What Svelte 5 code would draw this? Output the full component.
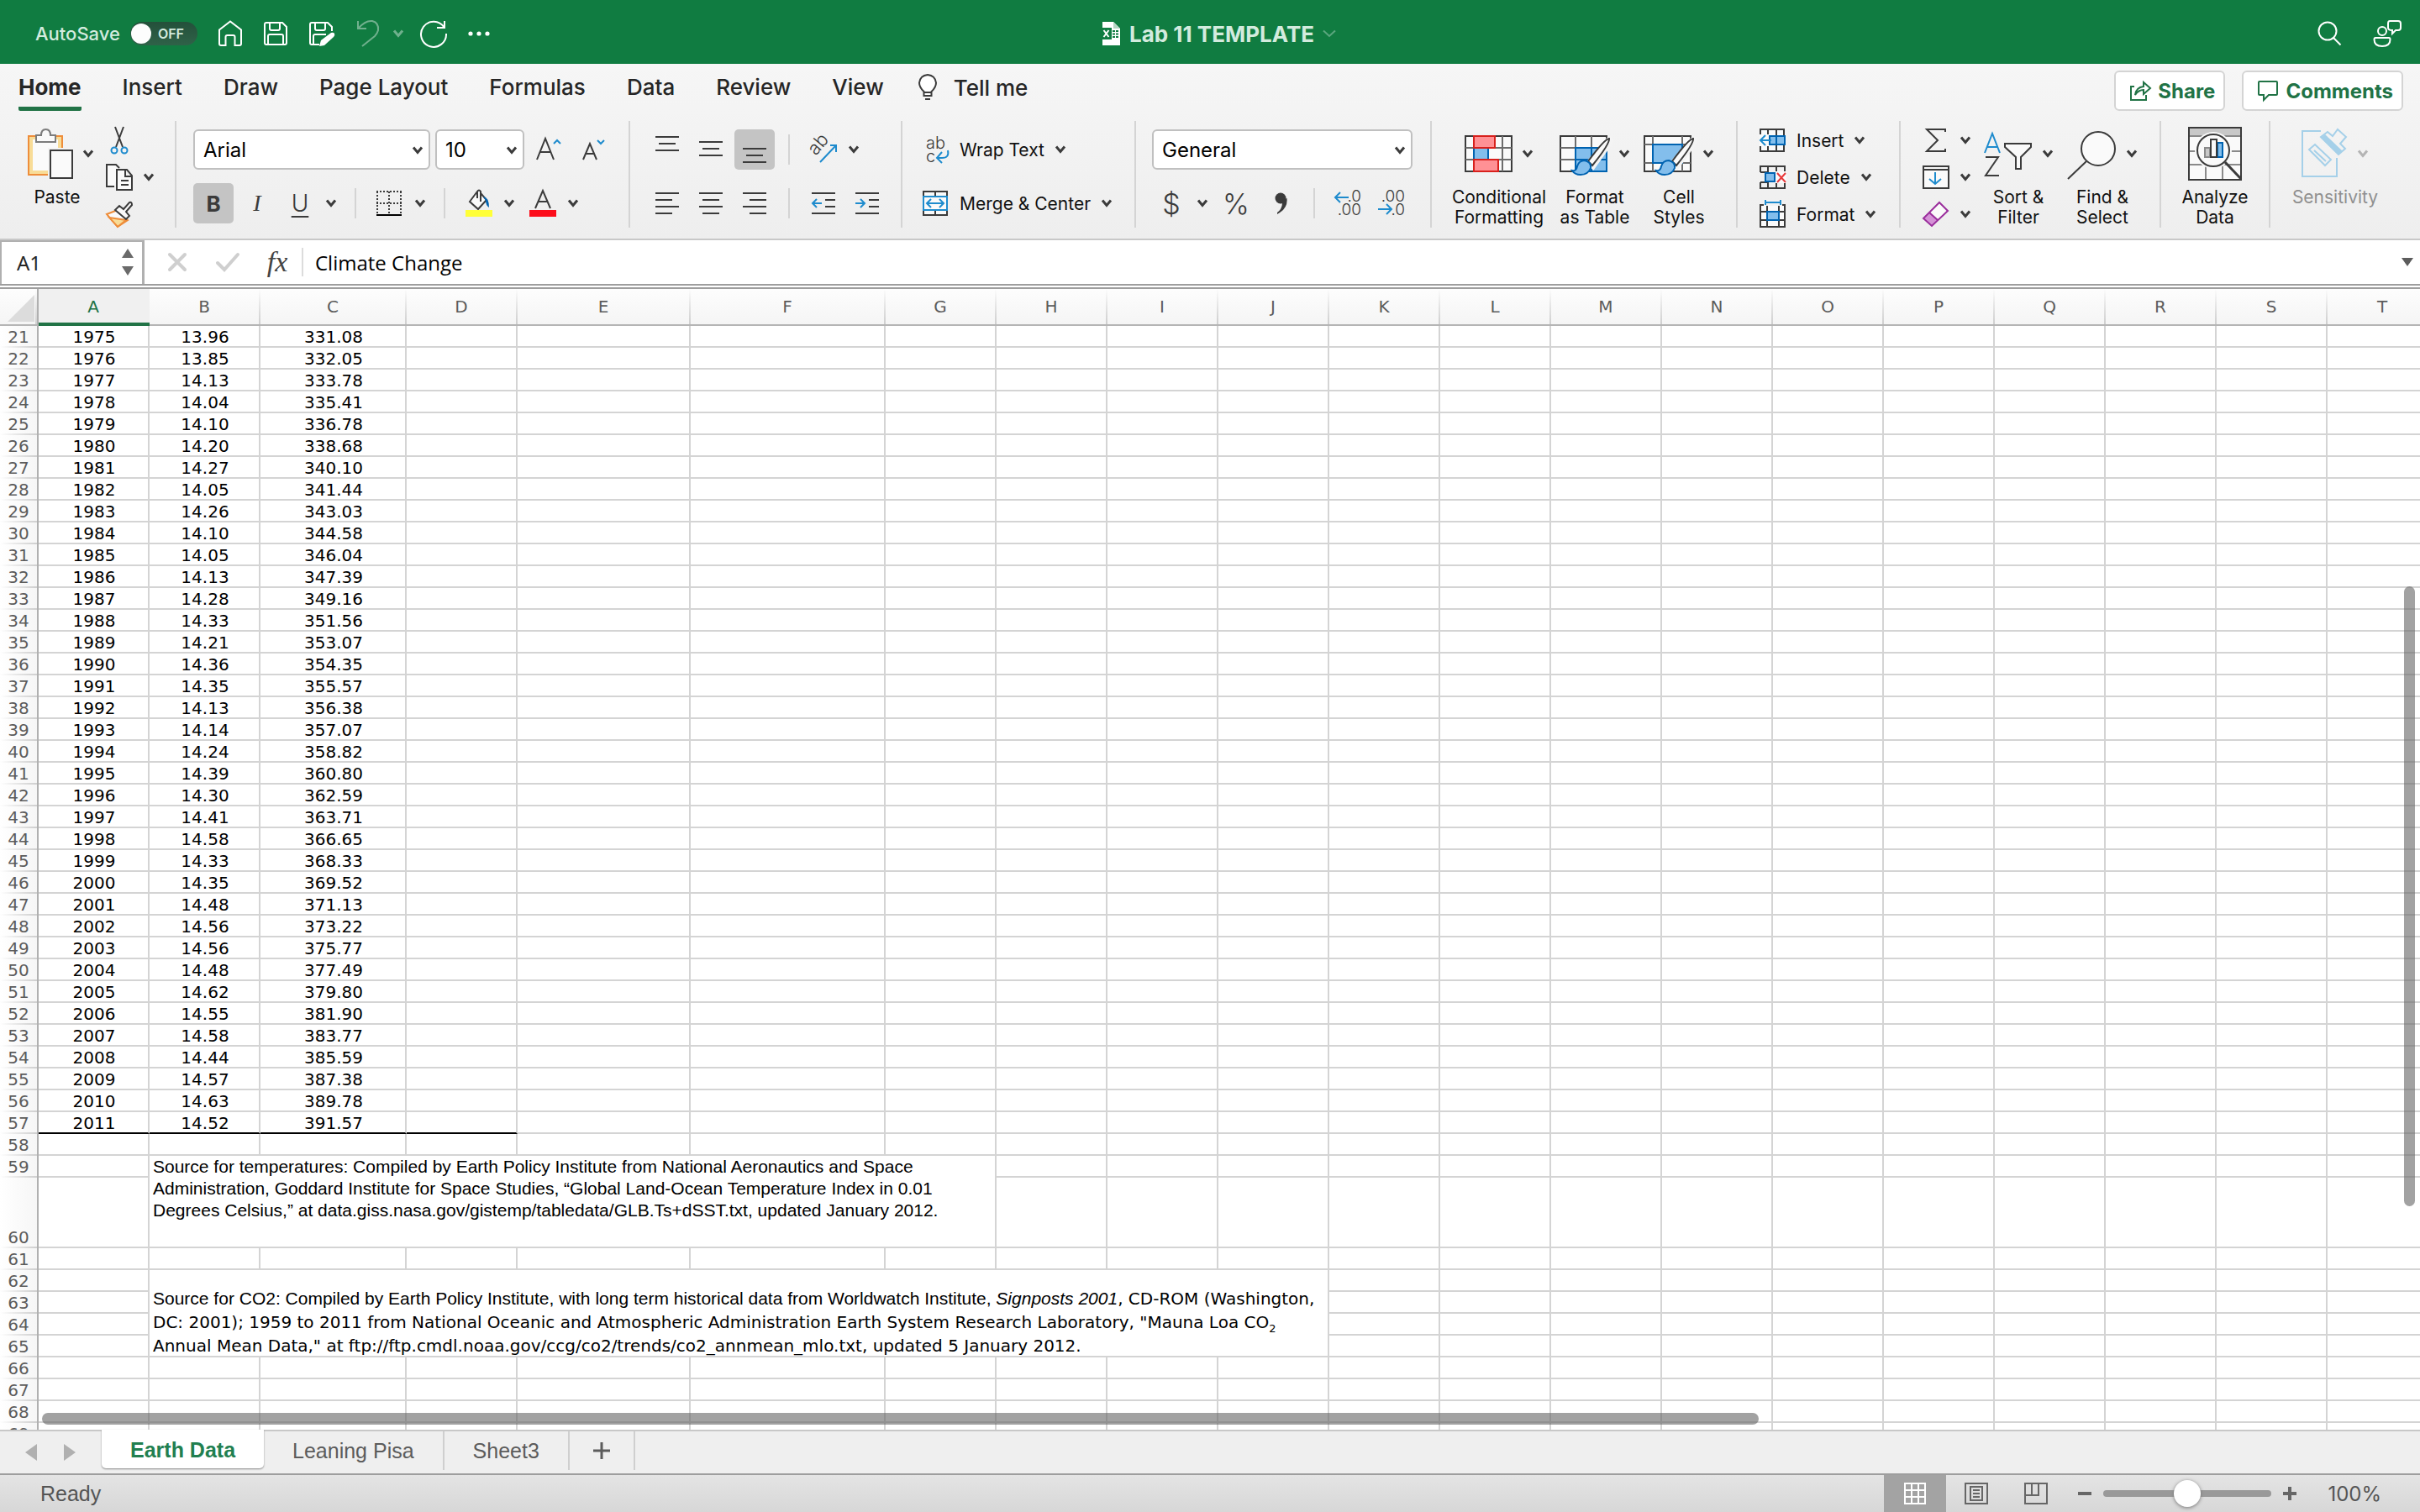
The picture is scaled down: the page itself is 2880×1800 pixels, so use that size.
<script lang="ts">
  type Column = { name: string; width: number };

  const columns: Column[] = [
    { name: 'A', width: 132 },
    { name: 'B', width: 132 },
    { name: 'C', width: 174 },
    { name: 'D', width: 132 },
    { name: 'E', width: 206 },
    { name: 'F', width: 232 },
    ...[...'GHIJKLMNOPQRST'].map((name) => ({ name, width: 132 }))
  ];
  const gutter = 46;
  const tableWidth = gutter + columns.reduce((sum, c) => sum + c.width, 0);

  const firstRow = 21;
  const lastRow = 69;
  const data = [
    ['1975', '13.96', '331.08'],
    ['1976', '13.85', '332.05'],
    ['1977', '14.13', '333.78'],
    ['1978', '14.04', '335.41'],
    ['1979', '14.10', '336.78'],
    ['1980', '14.20', '338.68'],
    ['1981', '14.27', '340.10'],
    ['1982', '14.05', '341.44'],
    ['1983', '14.26', '343.03'],
    ['1984', '14.10', '344.58'],
    ['1985', '14.05', '346.04'],
    ['1986', '14.13', '347.39'],
    ['1987', '14.28', '349.16'],
    ['1988', '14.33', '351.56'],
    ['1989', '14.21', '353.07'],
    ['1990', '14.36', '354.35'],
    ['1991', '14.35', '355.57'],
    ['1992', '14.13', '356.38'],
    ['1993', '14.14', '357.07'],
    ['1994', '14.24', '358.82'],
    ['1995', '14.39', '360.80'],
    ['1996', '14.30', '362.59'],
    ['1997', '14.41', '363.71'],
    ['1998', '14.58', '366.65'],
    ['1999', '14.33', '368.33'],
    ['2000', '14.35', '369.52'],
    ['2001', '14.48', '371.13'],
    ['2002', '14.56', '373.22'],
    ['2003', '14.56', '375.77'],
    ['2004', '14.48', '377.49'],
    ['2005', '14.62', '379.80'],
    ['2006', '14.55', '381.90'],
    ['2007', '14.58', '383.77'],
    ['2008', '14.44', '385.59'],
    ['2009', '14.57', '387.38'],
    ['2010', '14.63', '389.78'],
    ['2011', '14.52', '391.57']
  ];
  const rows = Array.from({ length: lastRow - firstRow + 1 }, (_, i) => firstRow + i);

  // B59:G60 and B62:J65 are merged
  function covered(row: number, col: number) {
    if (col < 1) return false;
    if (row === 59 || row === 60) return col <= 6;
    if (row >= 62 && row <= 65) return col <= 9;
    return false;
  }

  const tabs = ['Home', 'Insert', 'Draw', 'Page Layout', 'Formulas', 'Data', 'Review', 'View'];
  const sheets = ['Earth Data', 'Leaning Pisa', 'Sheet3'];

  let activeTab = $state('Home');
  let activeSheet = $state('Earth Data');
  let autoSave = $state(false);
  let font = $state('Arial');
  let size = $state('10');
  let format = $state('General');
  let cellName = $state('A1');
  let formula = $state('Climate Change');
  let zoom = $state(100);
</script>

{#snippet chevron()}
  <svg class="chevron" width="14" height="10" viewBox="0 0 14 10"><path d="M2 1.5 7 7.5 12 1.5" fill="none" stroke="currentColor" stroke-width="3" /></svg>
{/snippet}

{#snippet lines(list: number[][])}
  <svg width="28" height="32" viewBox="0 0 28 32">
    {#each list as [x1, x2, y]}<path d="M{x1} {y}H{x2}" stroke="#3b3b3b" stroke-width="2" />{/each}
  </svg>
{/snippet}

{#snippet brush()}
  <path d="M59 14 34 43l6 5 20-28q4-8-1-6z" fill="#fafafa" stroke="#f4f4f4" stroke-width="5" />
  <path d="M59 14Q54 14 34 41l5 5Q60 20 59 14z" fill="#fafafa" stroke="#3b3b3b" stroke-width="2" />
  <path d="M15 52q5 1 6-5 2-7 9-7 8 2 7 9-3 8-12 8-7 0-10-5z" fill="#83beec" stroke="#0063b1" stroke-width="2" />
{/snippet}

<div class="app">
  <header class="titlebar">
    <div class="quick">
      <label class="autosave">
        <span>AutoSave</span>
        <input type="checkbox" bind:checked={autoSave} />
        <span class="switch" class:on={autoSave}><i></i><b>{autoSave ? 'ON' : 'OFF'}</b></span>
      </label>
      <button aria-label="Home">
        <svg width="30" height="32" viewBox="0 0 30 32"><path d="M2 11.5 15 1.5l13 10V28q0 2-2 2h-5.500V20q0-2-2-2h-7q-2 0-2 2v10H4q-2 0-2-2z" fill="none" stroke="#fff" stroke-width="2" /></svg>
      </button>
      <button aria-label="Save">
        <svg width="30" height="32" viewBox="0 0 30 32"><path d="M4 3h19l5 5v19q0 2-2 2H4q-2 0-2-2V5q0-2 2-2zM8 3v7q0 2 2 2h8q2 0 2-2V3M6 29V19q0-2 2-2h14q2 0 2 2v10" fill="none" stroke="#fff" stroke-width="2" /></svg>
      </button>
      <button aria-label="Save as">
        <svg width="32" height="34" viewBox="0 0 32 34"><path d="M13 30H4q-2 0-2-2V6q0-2 2-2h19l5 5v5M8 4v7q0 2 2 2h8q2 0 2-2V4M6 30V20q0-2 2-2h13" fill="none" stroke="#fff" stroke-width="2" /><path d="M13 32l2-7 12-9q3-1 4 1 1 2-1 4l-11 10z" fill="#fff" /></svg>
      </button>
      <div class="history">
        <button class="undo" aria-label="Undo">
          <svg width="30" height="34" viewBox="0 0 30 34"><path d="M3 2v9h10M3 11Q12 1 20 2q8 2 7 11-1 4-4 7L8 32" fill="none" stroke="#fff" stroke-width="2" /></svg>
          {@render chevron()}
        </button>
        <button aria-label="Redo">
          <svg width="34" height="34" viewBox="0 0 34 34"><path d="M30 2v8h-9M29.500 9.500A15 15 0 1 0 32 17" fill="none" stroke="#fff" stroke-width="2" /></svg>
        </button>
      </div>
      <button aria-label="More">
        <svg width="28" height="6" viewBox="0 0 28 6"><circle cx="3" cy="3" r="2.600" fill="#fff" /><circle cx="13" cy="3" r="2.600" fill="#fff" /><circle cx="23" cy="3" r="2.600" fill="#fff" /></svg>
      </button>
    </div>
    <div class="doc">
      <svg width="24" height="32" viewBox="0 0 24 32">
        <path d="M2 2h13l8 8v20H2z" fill="#fff" /><path d="M15 2v8h8z" fill="#b5d6c3" />
        <path d="M0 9h13v14H0z" fill="#107c41" /><path d="M3.500 12l6 8M9.500 12l-6 8" stroke="#fff" stroke-width="2" />
        <path d="M14 13h7M14 16.500h7M14 20h7" stroke="#107c41" stroke-width="2" /><path d="M17.500 11v11" stroke="#fff" stroke-width="1" />
      </svg>
      <h1>Lab 11 TEMPLATE</h1>
      <svg width="16" height="10" viewBox="0 0 16 10"><path d="M1 1.500 8 8l7-6.500" fill="none" stroke="#5ba67e" stroke-width="2" /></svg>
    </div>
    <div class="right">
      <button aria-label="Search">
        <svg width="30" height="30" viewBox="0 0 30 30"><circle cx="12" cy="12" r="10.500" fill="none" stroke="#fff" stroke-width="2" /><path d="M19 20l8.500 8.500" stroke="#fff" stroke-width="2" /></svg>
      </button>
      <button aria-label="Account">
        <svg width="34" height="34" viewBox="0 0 34 34"><g fill="none" stroke="#fff" stroke-width="2"><circle cx="11" cy="14" r="5" /><path d="M3 22h16q1.500 0 1.500 2 0 8-9.500 8t-9.500-8q0-2 1.500-2zM20 2h10q3 0 3 3v5q0 3-3 3h-3l-4 4v-4q-5 0-5-3V5q0-3 2-3z" /></g></svg>
      </button>
    </div>
  </header>

  <div class="ribbon">
    <nav>
      {#each tabs as tab (tab)}
        <button class="tab" class:active={tab === activeTab} onclick={() => (activeTab = tab)}>{tab}</button>
      {/each}
      <button class="tell">
        <svg width="22" height="32" viewBox="0 0 22 32"><path d="M6.500 26v-5Q1 16 1 10.500 2 2 11 1q9 1 10 9.500 0 5.500-5.500 10.500v5zM6.500 22h9" fill="#fff" stroke="#3b3b3b" stroke-width="2" /><path d="M8 30h6" stroke="#3b3b3b" stroke-width="2" /></svg>
        Tell me
      </button>
      <div class="actions">
        <button>
          <svg width="26" height="26" viewBox="0 0 26 26"><path d="M6 8H2v16h18v-6M7 18Q8 9 17 8V3l8 7-8 7v-5Q11 12 7 18z" fill="none" stroke="#217346" stroke-width="2" /></svg>
          Share
        </button>
        <button>
          <svg width="26" height="26" viewBox="0 0 26 26"><path d="M3 2h20q1 0 1 1v14q0 1-1 1h-9l-6 6v-6H3q-1 0-1-1V3q0-1 1-1z" fill="none" stroke="#217346" stroke-width="2" /></svg>
          Comments
        </button>
      </div>
    </nav>

    <div class="groups">
      <section class="clipboard">
        <button class="big paste">
          <span class="glyph">
            <svg width="56" height="62" viewBox="0 0 56 62">
              <path d="M2 10h40v46H2z" fill="#f8dc97" stroke="#ee8d3a" stroke-width="2" /><path d="M7 14h30v37H7z" fill="#fafafa" />
              <path d="M11 9h6q0-7 5.500-7T28 9h6v8H11z" fill="#fafafa" stroke="#7c7c7c" stroke-width="2" />
              <path d="M25 24h31v38H25z" fill="#f3f3f3" /><path d="M28 27h26v33H28z" fill="#fafafa" stroke="#3b3b3b" stroke-width="2" />
            </svg>
            {@render chevron()}
          </span>
          <span>Paste</span>
        </button>
        <div class="stack">
          <button aria-label="Cut">
            <svg width="32" height="34" viewBox="0 0 32 34"><path d="M11 1l9 24M21 1l-9 24" stroke="#3b3b3b" stroke-width="2" /><g fill="none" stroke="#1e8bcd" stroke-width="2"><circle cx="10" cy="29" r="3.500" /><circle cx="22" cy="29" r="3.500" /></g></svg>
          </button>
          <button aria-label="Copy">
            <svg width="32" height="34" viewBox="0 0 32 34"><path d="M10 28H1V2h11l4 4" fill="#fafafa" stroke="#3b3b3b" stroke-width="2" /><path d="M13 8h12l6 7v17H13zM23 8v8h8M18 21h9M18 26h9" fill="#fafafa" stroke="#3b3b3b" stroke-width="2" /></svg>
            {@render chevron()}
          </button>
          <button aria-label="Format painter">
            <svg width="32" height="34" viewBox="0 0 32 34"><path d="M1 17l13-5 12 12-12 8z" fill="#fafafa" stroke="#ee8d3a" stroke-width="2" /><path d="M4 21l20 3-10 8z" fill="#f8dc97" stroke="#ee8d3a" stroke-width="2" /><path d="M11 12l5-5 5 4 7-8q3-1 3 3l-7 8 4 5-4 4z" fill="#fafafa" stroke="#3b3b3b" stroke-width="2" /></svg>
          </button>
        </div>
      </section>

      <section class="fonts">
        <div class="row">
          <span class="select family">
            <select aria-label="Font" bind:value={font}><option>Arial</option><option>Verdana</option></select>
            {@render chevron()}
          </span>
          <span class="select size">
            <select aria-label="Font size" bind:value={size}><option>10</option><option>12</option></select>
            {@render chevron()}
          </span>
          <button class="grow" aria-label="Increase font size">
            <svg width="32" height="32" viewBox="0 0 32 32"><path d="M1 28 11 3l10 25M4.500 19h13" fill="none" stroke="#3b3b3b" stroke-width="2" /><path d="M21 9l4-4 4 4" fill="none" stroke="#1e8bcd" stroke-width="2" /></svg>
          </button>
          <button class="grow" aria-label="Decrease font size">
            <svg width="32" height="32" viewBox="0 0 32 32"><path d="M2 28 10 9l8 19M5 21h10" fill="none" stroke="#3b3b3b" stroke-width="2" /><path d="M19 5l4 4 4-4" fill="none" stroke="#1e8bcd" stroke-width="2" /></svg>
          </button>
        </div>
        <div class="row styles">
          <button class="pressed bold" aria-pressed="true">B</button>
          <button class="italic">I</button>
          <button class="underline">U</button>
          <button aria-label="Underline options">{@render chevron()}</button>
          <hr />
          <button aria-label="Borders">
            <svg width="30" height="32" viewBox="0 0 30 32"><path d="M0 2h30M0 16h30M1 2v27M15 2v27M29 2v27" stroke="#3b3b3b" stroke-width="2" stroke-dasharray="2 2" /><path d="M0 30h30" stroke="#000" stroke-width="2" /></svg>
          </button>
          <button aria-label="Border options">{@render chevron()}</button>
          <hr />
          <button aria-label="Fill colour">
            <svg width="32" height="34" viewBox="0 0 32 34"><path d="M14 3 5 15l10 9 10-11-7-8v10M14 11V3q2-3 4 0v4" fill="#fafafa" stroke="#3b3b3b" stroke-width="2" /><path d="M21 9q7 1 7 13-4-3-4-8z" fill="#0063b1" /><path d="M0 25h32v8H0z" fill="#ffff38" /></svg>
          </button>
          <button aria-label="Fill options">{@render chevron()}</button>
          <button aria-label="Font colour">
            <svg width="32" height="34" viewBox="0 0 32 34"><path d="M7 23 16 2l9 21M10.500 15h11" fill="none" stroke="#3b3b3b" stroke-width="2" /><path d="M0 25h32v8H0z" fill="#fc0d1b" /></svg>
          </button>
          <button aria-label="Font colour options">{@render chevron()}</button>
        </div>
      </section>

      <section class="align">
        <div class="row aligns">
          <button aria-label="Top align">{@render lines([[0, 28, 1], [4, 24, 9], [0, 28, 17]])}</button>
          <button aria-label="Middle align">{@render lines([[0, 28, 7], [4, 24, 15], [0, 28, 23]])}</button>
          <button class="pressed" aria-label="Bottom align">{@render lines([[0, 28, 15], [4, 24, 23], [0, 28, 31]])}</button>
          <hr />
          <button aria-label="Orientation">
            <svg width="34" height="34" viewBox="0 0 34 34"><text x="0" y="0" font-size="22" fill="#3b3b3b" transform="translate(8 25) rotate(-50)">ab</text><path d="M13 32 32 12M25 12h7v8" fill="none" stroke="#1e8bcd" stroke-width="2" /></svg>
          </button>
          <button class="start" aria-label="Orientation options">{@render chevron()}</button>
        </div>
        <div class="row aligns">
          <button aria-label="Align left">{@render lines([[0, 28, 4], [0, 20, 12], [0, 28, 20], [0, 20, 28]])}</button>
          <button aria-label="Align centre">{@render lines([[0, 28, 4], [4, 24, 12], [0, 28, 20], [4, 24, 28]])}</button>
          <button aria-label="Align right">{@render lines([[0, 28, 4], [8, 28, 12], [0, 28, 20], [8, 28, 28]])}</button>
          <hr />
          <button aria-label="Decrease indent">
            <svg width="28" height="32" viewBox="0 0 28 32"><path d="M0 4h28M16 12h12M16 20h12M0 28h28" stroke="#3b3b3b" stroke-width="2" /><path d="M12 16H1M6 11l-5 5 5 5" fill="none" stroke="#1e8bcd" stroke-width="2" /></svg>
          </button>
          <button aria-label="Increase indent">
            <svg width="28" height="32" viewBox="0 0 28 32"><path d="M0 4h28M16 12h12M16 20h12M0 28h28" stroke="#3b3b3b" stroke-width="2" /><path d="M0 16h11M6 11l5 5-5 5" fill="none" stroke="#1e8bcd" stroke-width="2" /></svg>
          </button>
        </div>
      </section>

      <section class="wrap">
        <button class="row wide">
          <svg width="34" height="34" viewBox="0 0 34 34"><text x="6" y="16" font-size="20" fill="#3b3b3b">ab</text><text x="6" y="32" font-size="20" fill="#3b3b3b">c</text><path d="M32 18q2 9-7 9h-6M25 20l-6 7 6 6" fill="none" stroke="#1e8bcd" stroke-width="2" /></svg>
          Wrap Text {@render chevron()}
        </button>
        <button class="row wide">
          <svg width="34" height="32" viewBox="0 0 34 32"><path d="M3 2h28v28H3zM17 2v28" fill="#fafafa" stroke="#3b3b3b" stroke-width="2" /><path d="M3 8h28v16H3z" fill="#fafafa" stroke="#1e8bcd" stroke-width="2" /><path d="M8 16h18M12 11l-5 5 5 5M22 11l5 5-5 5" fill="none" stroke="#1e8bcd" stroke-width="2" /></svg>
          Merge &amp; Center {@render chevron()}
        </button>
      </section>

      <section class="number">
        <div class="row">
          <span class="select format">
            <select aria-label="Number format" bind:value={format}><option>General</option><option>Currency</option></select>
            {@render chevron()}
          </span>
        </div>
        <div class="row numbers">
          <button class="sign">$</button>
          <button aria-label="Currency options">{@render chevron()}</button>
          <button class="sign">%</button>
          <button aria-label="Comma style">
            <svg width="18" height="28" viewBox="0 0 18 28"><circle cx="8" cy="8" r="6.500" fill="#3b3b3b" /><path d="M15.500 8Q17 20 4 27v-2Q11 20 10 10z" fill="#3b3b3b" /></svg>
          </button>
          <hr />
          <button aria-label="Increase decimal">
            <svg width="34" height="34" viewBox="0 0 34 34"><text x="33" y="15" text-anchor="end" font-size="19" fill="#3b3b3b">.0</text><text x="33" y="31" text-anchor="end" font-size="19" fill="#3b3b3b">.00</text><path d="M18 10H2M8 4l-6 6 6 6" fill="none" stroke="#1e8bcd" stroke-width="2" /></svg>
          </button>
          <button aria-label="Decrease decimal">
            <svg width="34" height="34" viewBox="0 0 34 34"><text x="33" y="15" text-anchor="end" font-size="19" fill="#3b3b3b">.00</text><text x="33" y="31" text-anchor="end" font-size="19" fill="#3b3b3b">.0</text><path d="M1 24h16M11 18l6 6-6 6" fill="none" stroke="#1e8bcd" stroke-width="2" /></svg>
          </button>
        </div>
      </section>

      <section class="looks">
        <button class="big">
          <span class="glyph">
            <svg width="58" height="64" viewBox="0 0 58 64"><path d="M1 11h55v42H1z" fill="#fafafa" stroke="#3b3b3b" stroke-width="2" /><path d="M1 25h55M1 39h55M11 11v42M45 11v42" stroke="#6d6d6d" stroke-width="2" /><path d="M11 25h17v14H11z" fill="#83beec" stroke="#0063b1" stroke-width="2" /><path d="M11 11h25v14H11zM11 39h29v14H11z" fill="#ff9195" stroke="#d8201c" stroke-width="2" /></svg>
            {@render chevron()}
          </span>
          <span>Conditional<br />Formatting</span>
        </button>
        <button class="big">
          <span class="glyph">
            <svg width="60" height="64" viewBox="0 0 60 64"><path d="M1 11h55v42H1z" fill="#fafafa" stroke="#3b3b3b" stroke-width="2" /><path d="M1 25h55M1 39h55M19 11v42M38 11v42" stroke="#6d6d6d" stroke-width="2" /><path d="M19 25h37v28H19zM38 25v28M19 39h37" fill="#83beec" stroke="#0063b1" stroke-width="2" />{@render brush()}</svg>
            {@render chevron()}
          </span>
          <span>Format<br />as Table</span>
        </button>
        <button class="big">
          <span class="glyph">
            <svg width="60" height="64" viewBox="0 0 60 64"><path d="M1 11h55v42H1z" fill="#fafafa" stroke="#3b3b3b" stroke-width="2" /><path d="M1 21h55M1 43h55M11 11v42M46 11v42" stroke="#6d6d6d" stroke-width="2" /><path d="M11 21h35v22H11z" fill="#83beec" stroke="#0063b1" stroke-width="2" />{@render brush()}</svg>
            {@render chevron()}
          </span>
          <span>Cell<br />Styles</span>
        </button>
      </section>

      <section class="cells">
        <div class="stack">
          <button>
            <svg width="32" height="30" viewBox="0 0 32 30"><path d="M1 2h28v26H1zM10 2v26M20 2v26" fill="#fafafa" stroke="#3b3b3b" stroke-width="2" /><path d="M0 8h12v14H0z" fill="#fafafa" /><path d="M12 10h18v10H12zM20 10v10" fill="#83beec" stroke="#0063b1" stroke-width="2" /><path d="M14 15H1M7 9l-6 6 6 6" fill="none" stroke="#1e8bcd" stroke-width="2" /></svg>
            Insert {@render chevron()}
          </button>
          <button>
            <svg width="32" height="30" viewBox="0 0 32 30"><path d="M1 9V2h29v7M1 21v7h29v-7M10 2v26M20 2v26M1 9h9M1 21h9" fill="none" stroke="#3b3b3b" stroke-width="2" /><path d="M7 10h11v10H7z" fill="#83beec" stroke="#0063b1" stroke-width="2" /><path d="M19 8h13v14H19z" fill="#fafafa" /><path d="M21 10l10 11M31 10 21 21" stroke="#e8393b" stroke-width="2" /></svg>
            Delete {@render chevron()}
          </button>
          <button>
            <svg width="32" height="34" viewBox="0 0 32 34"><path d="M1 6h29v26H1zM1 14h29M1 24h29M9 6v26M23 6v26" fill="#fafafa" stroke="#3b3b3b" stroke-width="2" /><path d="M9 14h14v10H9z" fill="#83beec" stroke="#0063b1" stroke-width="2" /><path d="M5 0h22v7H5z" fill="#f3f3f3" /><path d="M7 3h18M7 0v6M25 0v6" stroke="#1e8bcd" stroke-width="2" /></svg>
            Format {@render chevron()}
          </button>
        </div>
      </section>

      <section class="editing">
        <div class="stack">
          <button aria-label="AutoSum">
            <svg width="32" height="30" viewBox="0 0 32 30"><path d="M27 5V2H5l13 13L5 28h22v-3" fill="none" stroke="#3b3b3b" stroke-width="2" /></svg>
            {@render chevron()}
          </button>
          <button aria-label="Fill">
            <svg width="32" height="30" viewBox="0 0 32 30"><path d="M1 2h30v26H1zM1 6h30" fill="#fafafa" stroke="#3b3b3b" stroke-width="2" /><path d="M15 9v14M8 17l7 6 7-6" fill="none" stroke="#1e8bcd" stroke-width="2" /></svg>
            {@render chevron()}
          </button>
          <button aria-label="Clear">
            <svg width="32" height="32" viewBox="0 0 32 32"><path d="M20 2l10 10-19 18L1 21z" fill="#fafafa" /><path d="M8 14l10 9-7 7-10-9z" fill="#d492d6" /><path d="M20 2l10 10-19 18L1 21zM8 14l10 9" fill="none" stroke="#9a2d9c" stroke-width="2" /></svg>
            {@render chevron()}
          </button>
        </div>
        <button class="big">
          <span class="glyph">
            <svg width="60" height="64" viewBox="0 0 60 64"><path d="M2 31 11 8l9 23M5 24h12" fill="none" stroke="#1e8bcd" stroke-width="2" /><path d="M3 36h15L3 58h16" fill="none" stroke="#3b3b3b" stroke-width="2" /><path d="M26 20h31v4L45 36v14h-6V36L26 24z" fill="#fafafa" stroke="#3b3b3b" stroke-width="2" /></svg>
            {@render chevron()}
          </span>
          <span>Sort &amp;<br />Filter</span>
        </button>
        <button class="big">
          <span class="glyph">
            <svg width="60" height="64" viewBox="0 0 60 64"><circle cx="37" cy="26" r="20" fill="#fafafa" stroke="#3b3b3b" stroke-width="2" /><path d="M23 41 1 62" stroke="#3b3b3b" stroke-width="2" /></svg>
            {@render chevron()}
          </span>
          <span>Find &amp;<br />Select</span>
        </button>
      </section>

      <section class="analyze">
        <button class="big">
          <span class="glyph">
            <svg width="66" height="66" viewBox="0 0 66 66"><path d="M2 2h62v62H2z" fill="#fafafa" /><path d="M2 2h62v10H2z" fill="#c8c8c8" /><path d="M2 12h62M2 30h62M2 46h62M22 46v18M42 46v18" stroke="#8a8a8a" stroke-width="2" /><path d="M2 2h62v62H2z" fill="none" stroke="#3b3b3b" stroke-width="2" /><circle cx="31" cy="29" r="22" fill="#fafafa" /><circle cx="31" cy="29" r="19" fill="#fafafa" stroke="#3b3b3b" stroke-width="2" /><path d="M45 43l19 20" stroke="#3b3b3b" stroke-width="3" /><path d="M21 26h6v11h-6z" fill="#c8c8c8" stroke="#8a8a8a" stroke-width="2" /><path d="M36 20h6v17h-6z" fill="#83beec" stroke="#0063b1" stroke-width="2" /><path d="M28 16h7v21h-7z" fill="#fafafa" stroke="#3b3b3b" stroke-width="2" /></svg>
          </span>
          <span>Analyze<br />Data</span>
        </button>
      </section>

      <section class="sensitivity">
        <button class="big" disabled>
          <span class="glyph">
            <svg width="56" height="64" viewBox="0 0 56 64"><g fill="none" stroke="#a5d0e9" stroke-width="2"><path d="M23 5H1v54h41V37" /><path d="M9 27l7-6 19 18-7 7zM15 28l14 13" /><path d="M23 12l8-6 6 5 6-8 10 9-7 8 6 6-8 7z" /></g><path d="M23 13l5-4 21 20-5 4z" fill="#a5d0e9" /></svg>
            {@render chevron()}
          </span>
          <span>Sensitivity</span>
        </button>
      </section>
    </div>
  </div>

  <div class="formula">
    <div class="name">
      <input aria-label="Name box" bind:value={cellName} />
      <svg width="14" height="34" viewBox="0 0 14 34"><path d="M7 1l7 11H0zM7 33l7-11H0z" fill="#6a6a6a" /></svg>
    </div>
    <button class="mark" aria-label="Cancel"><svg width="24" height="24" viewBox="0 0 24 24"><path d="M3 3l18 18M21 3 3 21" stroke="#cfcfcf" stroke-width="4" stroke-linecap="round" /></svg></button>
    <button class="mark" aria-label="Enter"><svg width="30" height="24" viewBox="0 0 30 24"><path d="M3 13l8 8L27 3" fill="none" stroke="#cfcfcf" stroke-width="4" stroke-linecap="round" /></svg></button>
    <button class="mark fx">fx</button>
    <input class="value" aria-label="Formula" bind:value={formula} />
    <button class="expand" aria-label="Expand formula bar"><svg width="14" height="10" viewBox="0 0 14 10"><path d="M0 0h14L7 10z" fill="#5c5c5c" /></svg></button>
  </div>

  <main>
    <table style:width="{tableWidth}px">
      <colgroup>
        <col style:width="{gutter}px" />
        {#each columns as c (c.name)}<col style:width="{c.width}px" />{/each}
      </colgroup>
      <thead>
        <tr>
          <th class="corner"><svg width="32" height="32" viewBox="0 0 32 32"><path d="M32 0v32H0z" fill="#dcdcdc" /></svg></th>
          {#each columns as c (c.name)}<th scope="col" class:selected={c.name === 'A'}>{c.name}</th>{/each}
        </tr>
      </thead>
      <tbody>
        {#each rows as row, i (row)}
          <tr class:tall={row === 60} class:ruled={row === 57}>
            <th scope="row">{row}</th>
            {#each columns as c, j (c.name)}
              {#if row === 59 && j === 1}
                <td class="note" colspan="6" rowspan="2">
                  Source for temperatures: Compiled by Earth Policy Institute from National Aeronautics and Space<br />
                  Administration, Goddard Institute for Space Studies, “Global Land-Ocean Temperature Index in 0.01<br />
                  Degrees Celsius,” at data.giss.nasa.gov/gistemp/tabledata/GLB.Ts+dSST.txt, updated January 2012.
                </td>
              {:else if row === 62 && j === 1}
                <td class="note low" colspan="9" rowspan="4">
                  <div>
                    Source for CO2: Compiled by Earth Policy Institute, with long term historical data from Worldwatch Institute, <em>Signposts 2001</em><span>, CD-ROM (Washington,<br />
                    DC: 2001); 1959 to 2011 from National Oceanic and Atmospheric Administration Earth System Research Laboratory, "Mauna Loa CO<sub>2</sub><br />
                    Annual Mean Data," at ftp://ftp.cmdl.noaa.gov/ccg/co2/trends/co2_annmean_mlo.txt, updated 5 January 2012.</span>
                  </div>
                </td>
              {:else if !covered(row, j)}
                <td>{data[i]?.[j] ?? ''}</td>
              {/if}
            {/each}
          </tr>
        {/each}
      </tbody>
    </table>
    <div class="scroll-x"></div>
    <div class="scroll-y"></div>
  </main>

  <div class="sheets">
    <button class="step" aria-label="Previous sheet"><svg width="14" height="20" viewBox="0 0 14 20"><path d="M14 0v20L0 10z" fill="#b0b0b0" /></svg></button>
    <button class="step" aria-label="Next sheet"><svg width="14" height="20" viewBox="0 0 14 20"><path d="M0 0v20l14-10z" fill="#b0b0b0" /></svg></button>
    {#each sheets as sheet (sheet)}
      <button class="sheet" class:active={sheet === activeSheet} onclick={() => (activeSheet = sheet)}>{sheet}</button>
    {/each}
    <button class="sheet add" aria-label="Add sheet"><svg width="22" height="22" viewBox="0 0 22 22"><path d="M11 1v20M1 11h20" stroke="#5c5c5c" stroke-width="3" /></svg></button>
  </div>

  <footer>
    <span class="ready">Ready</span>
    <button class="view current" aria-label="Normal view"><svg width="28" height="28" viewBox="0 0 28 28"><path d="M2 2h24v24H2zM2 10h24M2 18h24M10 2v24M18 2v24" fill="none" stroke="#fff" stroke-width="2" /></svg></button>
    <button class="view" aria-label="Page layout view"><svg width="28" height="28" viewBox="0 0 28 28"><path d="M1 2h26v24H1zM7 6h14v16H7zM10 10h8M10 14h8M10 18h8" fill="none" stroke="#666" stroke-width="2" /></svg></button>
    <button class="view" aria-label="Page break view"><svg width="28" height="28" viewBox="0 0 28 28"><path d="M1 2h26v24H1zM9 2v14M17 2v14H1" fill="none" stroke="#666" stroke-width="2" /></svg></button>
    <button class="zoom-step" aria-label="Zoom out"><svg width="18" height="18" viewBox="0 0 18 18"><path d="M1 9h16" stroke="#666" stroke-width="4" /></svg></button>
    <input type="range" aria-label="Zoom" min="0" max="200" bind:value={zoom} />
    <button class="zoom-step" aria-label="Zoom in"><svg width="18" height="18" viewBox="0 0 18 18"><path d="M1 9h16M9 1v16" stroke="#666" stroke-width="4" /></svg></button>
    <output>{zoom}%</output>
  </footer>
</div>

<style>
  :global(body) {
    overflow: hidden;
  }
  .app {
    display: flex;
    flex-direction: column;
    height: 100vh;
    font-family: Inter, 'Liberation Sans', sans-serif;
    font-size: 21px;
    color: #111;
    background: #fff;
  }
  button {
    display: flex;
    align-items: center;
    justify-content: center;
    padding: 0;
    border: 0;
    background: none;
    font: inherit;
    color: inherit;
    white-space: nowrap;
  }
  svg {
    flex: none;
    display: block;
    overflow: visible;
  }
  svg text {
    font-family: Inter, sans-serif;
    font-weight: 300;
  }
  input,
  select {
    font: inherit;
    color: inherit;
    border: 0;
    margin: 0;
    min-width: 0;
  }
  .chevron {
    color: #3b3b3b;
  }

  .titlebar {
    display: grid;
    grid-template-columns: 1fr auto 1fr;
    align-items: center;
    box-sizing: border-box;
    height: 76px;
    padding: 4px 22px 0 42px;
    background: #107c41;
    color: #d3ebde;
  }
  .quick,
  .history,
  .doc,
  .right,
  .autosave {
    display: flex;
    align-items: center;
  }
  .quick {
    gap: 24px;
  }
  .history {
    gap: 18px;
  }
  .autosave {
    gap: 12px;
    font-weight: 500;
    font-size: 22px;
  }
  .autosave input {
    position: absolute;
    opacity: 0;
  }
  .switch {
    display: flex;
    align-items: center;
    gap: 8px;
    width: 80px;
    height: 28px;
    border-radius: 14px;
    background: linear-gradient(#24503a, #2f6248);
  }
  .switch.on {
    flex-direction: row-reverse;
  }
  .switch i {
    width: 24px;
    height: 24px;
    margin-left: 1px;
    border-radius: 50%;
    background: #fdfdfd;
  }
  .switch b {
    font-size: 16px;
    font-weight: 600;
  }
  .undo {
    gap: 14px;
    opacity: 0.4;
  }
  .undo .chevron {
    color: #fff;
  }
  .doc {
    gap: 10px;
  }
  .doc h1 {
    margin: 0;
    font-size: 26px;
    font-weight: 700;
  }
  .right {
    justify-content: flex-end;
    gap: 36px;
  }

  .ribbon {
    background: linear-gradient(#f6f6f6, #eeeeee);
    border-bottom: 2px solid #c8c8c8;
    padding-bottom: 16px;
  }
  nav {
    display: flex;
    align-items: stretch;
    gap: 49px;
    height: 56px;
    padding: 0 20px 12px 22px;
    font-size: 26px;
    font-weight: 500;
    color: #262626;
  }
  .tab {
    padding-top: 4px;
    border-bottom: 5px solid transparent;
  }
  .tab.active {
    font-weight: 700;
    border-color: #217346;
    border-radius: 2px;
  }
  .tell {
    gap: 20px;
    margin-left: -8px;
  }
  .actions {
    display: flex;
    gap: 20px;
    margin: 8px 0 0 auto;
  }
  .actions button {
    gap: 8px;
    height: 48px;
    padding: 0 10px 0 16px;
    border: 2px solid #d4d4d4;
    border-radius: 6px;
    background: #fff;
    color: #217346;
    font-size: 24px;
    font-weight: 700;
  }

  .groups {
    display: grid;
    grid-template-columns: 210px 540px 324px 278px 352px 364px 194px 310px 130px 1fr;
    height: 124px;
  }
  section {
    box-sizing: border-box;
    min-width: 0;
    border-right: 2px solid #d4d4d4;
  }
  section:last-child {
    border: 0;
  }
  .fonts,
  .align,
  .wrap,
  .number {
    display: flex;
    flex-direction: column;
    gap: 16px;
    padding-top: 10px;
  }
  .row {
    display: flex;
    align-items: center;
    height: 48px;
    flex: none;
  }
  .styles,
  .aligns,
  .numbers {
    display: grid;
  }
  .row button {
    height: 48px;
  }
  .row hr {
    justify-self: center;
    width: 2px;
    height: 36px;
    margin: 0;
    border: 0;
    background: #d4d4d4;
  }
  .pressed {
    background: #c4c4c4;
    border-radius: 5px;
  }

  .clipboard {
    display: flex;
    padding-left: 32px;
    gap: 14px;
  }
  .big {
    flex-direction: column;
    justify-content: flex-start;
    gap: 8px;
    padding-top: 7px;
    line-height: 24px;
  }
  .glyph {
    display: flex;
    align-items: center;
    gap: 10px;
    height: 64px;
  }
  .paste span:last-child {
    padding-right: 8px;
  }
  .stack {
    display: flex;
    flex-direction: column;
    gap: 16px;
    padding-top: 9px;
  }
  .stack button {
    justify-content: flex-start;
    gap: 12px;
    height: 28px;
  }

  .fonts {
    padding-left: 20px;
  }
  .fonts .row:first-child {
    gap: 6px;
  }
  .select {
    position: relative;
    display: block;
    height: 48px;
  }
  .select select {
    appearance: none;
    width: 100%;
    height: 48px;
    padding: 0 10px;
    border: 2px solid #c0c0c0;
    border-radius: 6px;
    background: #fff;
    color: #000;
    font-size: 24px;
  }
  .select .chevron {
    position: absolute;
    right: 8px;
    top: 20px;
    pointer-events: none;
  }
  .family {
    width: 282px;
  }
  .size {
    width: 106px;
  }
  .grow {
    width: 48px;
  }
  .styles {
    grid-template-columns: 48px 56px 46px 28px 30px 50px 24px 34px 48px 24px 56px 16px;
    font-size: 28px;
    color: #3b3b3b;
  }
  .bold {
    font-weight: 700;
    font-size: 26px;
  }
  .italic {
    font-family: 'Liberation Serif', serif;
    font-style: italic;
  }
  .underline {
    font-weight: 300;
    text-decoration: underline;
    text-underline-offset: 5px;
    text-decoration-thickness: 2px;
  }
  .align {
    padding-left: 18px;
  }
  .aligns {
    grid-template-columns: 52px 52px 52px 30px 52px 52px;
  }
  .aligns .pressed {
    width: 48px;
    justify-self: center;
  }
  .start {
    justify-content: flex-start;
    padding-left: 3px;
  }
  .wrap {
    padding-left: 22px;
  }
  .wide {
    gap: 12px;
    justify-content: flex-start;
  }
  .number {
    padding-left: 19px;
  }
  .format {
    width: 310px;
  }
  .numbers {
    grid-template-columns: 46px 28px 52px 56px 22px 58px 46px;
  }
  .sign {
    font-size: 34px;
    font-weight: 300;
    color: #3b3b3b;
  }
  .looks {
    display: grid;
    grid-template-columns: 124px 104px 96px;
    padding-left: 18px;
  }
  .cells,
  .editing {
    padding-left: 26px;
  }
  .editing {
    display: grid;
    grid-template-columns: 66px 96px 104px;
  }
  .analyze,
  .sensitivity {
    display: grid;
    justify-content: center;
  }
  .sensitivity {
    padding-right: 24px;
  }
  .sensitivity .big {
    color: #8f8f8f;
  }
  .sensitivity .chevron {
    color: #b4b4b4;
  }

  .formula {
    display: flex;
    align-items: center;
    height: 52px;
    border-bottom: 2px solid #9e9e9e;
    font-family: 'Open Sans', 'Noto Sans', sans-serif;
    font-size: 24px;
    color: #000;
  }
  .name {
    display: flex;
    align-items: center;
    box-sizing: border-box;
    width: 172px;
    height: 52px;
    padding: 0 10px 2px 18px;
    border: 2px solid #b0b0b0;
    border-width: 2px 3px 0 2px;
  }
  .name input {
    flex: 1;
    padding: 0;
    font-family: 'Noto Sans', sans-serif;
    color: #262626;
  }
  .mark {
    width: 60px;
    height: 34px;
    margin-left: 9px;
  }
  .mark + .mark {
    margin-left: 0;
  }
  .fx {
    box-sizing: border-box;
    border-right: 2px solid #dcdcdc;
    font-family: 'Liberation Serif', serif;
    font-style: italic;
    font-size: 34px;
    color: #444;
  }
  .value {
    flex: 1;
    padding: 0 14px;
    background: none;
  }
  .expand {
    padding-right: 8px;
  }

  main {
    position: relative;
    flex: 1;
    min-height: 0;
    overflow: hidden;
    margin-top: 2px;
    border-top: 2px solid #9e9e9e;
  }
  table {
    table-layout: fixed;
    border-collapse: separate;
    border-spacing: 0;
    font-family: 'DejaVu Sans', sans-serif;
    font-size: 20px;
    line-height: 22px;
    color: #000;
  }
  th,
  td {
    box-sizing: border-box;
    padding: 0;
    overflow: hidden;
    font-weight: 400;
    text-align: center;
    white-space: nowrap;
  }
  thead th {
    height: 44px;
    padding: 0 2px 0 0;
    border-bottom: 2px solid #b5b5b5;
    background: linear-gradient(transparent, #cfcfcf) right / 2px 100% no-repeat, linear-gradient(#fdfdfd, #f5f5f5);
    color: #5c5c5c;
  }
  thead th.selected {
    padding-top: 2px;
    border-bottom: 4px solid #217346;
    background: #f0f0f0;
    color: #217346;
  }
  .corner svg {
    margin: 4px 0 0 9px;
  }
  thead th.corner,
  tbody th {
    border-right: 2px solid #b0b0b0;
  }
  tbody th {
    vertical-align: bottom;
    padding: 0 0 2px;
    background: linear-gradient(90deg, transparent, #cfcfcf) bottom / 100% 2px no-repeat, linear-gradient(90deg, #fff, #f6f6f6);
    color: #5c5c5c;
  }
  td {
    height: 26px;
    padding: 2px 0 0 2px;
    border: 0 solid #d4d4d4;
    border-width: 0 2px 2px 0;
  }
  .tall {
    height: 84px;
  }
  .ruled td:nth-child(-n + 5) {
    border-bottom-color: #000;
  }
  .note {
    padding: 0 0 0 4px;
    vertical-align: top;
    text-align: left;
    font-family: 'Liberation Sans', sans-serif;
    font-size: 21px;
    line-height: 26px;
  }
  .low {
    overflow: visible;
    line-height: 28px;
  }
  /* the last line runs down to the cell's bottom rule */
  .low div {
    box-sizing: border-box;
    height: 102px;
    padding-top: 20px;
  }
  .low span {
    font-family: 'DejaVu Sans', sans-serif;
    font-size: 20px;
  }
  sub {
    font-size: 13px;
    line-height: 0;
  }
  .scroll-x,
  .scroll-y {
    position: absolute;
    border-radius: 7px;
    background: rgba(100, 100, 100, 0.6);
  }
  .scroll-x {
    left: 50px;
    right: 787px;
    bottom: 6px;
    height: 14px;
  }
  .scroll-y {
    top: 354px;
    right: 6px;
    bottom: 266px;
    width: 13px;
  }

  .sheets {
    display: flex;
    height: 50px;
    padding-left: 14px;
    border-top: 2px solid #c8c8c8;
    border-bottom: 2px solid #9e9e9e;
    background: #efefef;
    font-family: 'Liberation Sans', sans-serif;
    font-size: 25px;
    color: #5c5c5c;
  }
  .step {
    width: 46px;
  }
  .sheet {
    height: 46px;
    padding: 0 34px;
    border-right: 2px solid #cfcfcf;
  }
  .sheet.active {
    height: 46px;
    margin: -2px 0 0 15px;
    padding-top: 3px;
    border: 0;
    border-radius: 0 0 5px 5px;
    background: #fff;
    box-shadow: 0 1px 2px #888;
    color: #217f50;
    font-weight: 700;
  }
  .sheet.add {
    padding: 0 27px;
  }

  footer {
    display: flex;
    align-items: center;
    height: 44px;
    padding-right: 46px;
    background: linear-gradient(#e4e4e4, #d7d7d7);
    font-size: 24px;
    color: #555;
  }
  .ready {
    flex: 1;
    padding-left: 48px;
    font-family: 'Liberation Sans', sans-serif;
    font-size: 25px;
  }
  .view {
    width: 71px;
    height: 44px;
  }
  .view.current {
    width: 74px;
    background: #a3a3a3;
  }
  .zoom-step {
    width: 30px;
    height: 44px;
  }
  .view + .zoom-step {
    margin-left: 8px;
  }
  input[type='range'] {
    appearance: none;
    width: 200px;
    height: 8px;
    margin: 0 7px;
    border-radius: 4px;
    background: #999;
  }
  input[type='range']::-webkit-slider-thumb {
    appearance: none;
    width: 32px;
    height: 32px;
    border-radius: 50%;
    background: #fff;
    box-shadow: 0 1px 4px #777;
  }
  output {
    width: 66px;
    margin-left: 28px;
    text-align: right;
  }
</style>
